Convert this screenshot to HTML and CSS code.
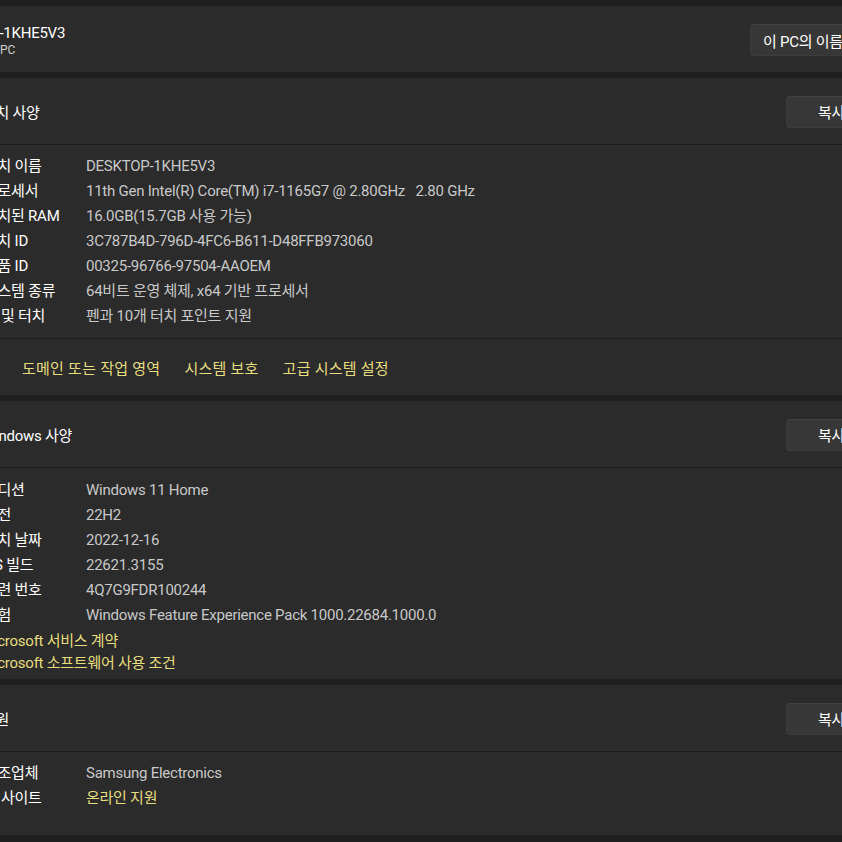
FILE: index.html
```html
<!DOCTYPE html>
<html lang="ko">
<head>
    <meta charset="UTF-8">
    <meta name="viewport" content="width=device-width, initial-scale=1.0">
    <title>정보</title>
    <link rel="stylesheet" href="styles.css">
</head>
<body>
    <div class="page">
        <!-- 상단 PC 이름 -->
        <section class="card top-card">
            <div class="pc-name">
                <div class="pc-title">DESKTOP-1KHE5V3</div>
                <div class="pc-sub">PC</div>
            </div>
            <button class="btn rename">이 PC의 이름 바꾸기</button>
        </section>

        <!-- 장치 사양 -->
        <section class="card">
            <div class="card-head">
                <svg class="head-icon" width="20" height="20" viewBox="0 0 20 20"><circle cx="10" cy="10" r="8" fill="none" stroke="#fff" stroke-width="1.2"/><path d="M10 9v5M10 6.2v.6" stroke="#fff" stroke-width="1.4"/></svg>
                <h2>장치 사양</h2>
                <button class="btn copy">복사</button>
            </div>
            <dl class="specs">
                <div class="row"><dt>장치 이름</dt><dd>DESKTOP-1KHE5V3</dd></div>
                <div class="row"><dt>프로세서</dt><dd>11th Gen Intel(R) Core(TM) i7-1165G7 @ 2.80GHz&nbsp;&nbsp;&nbsp;2.80 GHz</dd></div>
                <div class="row"><dt>설치된 RAM</dt><dd>16.0GB(15.7GB 사용 가능)</dd></div>
                <div class="row"><dt>장치 ID</dt><dd>3C787B4D-796D-4FC6-B611-D48FFB973060</dd></div>
                <div class="row"><dt>제품 ID</dt><dd>00325-96766-97504-AAOEM</dd></div>
                <div class="row"><dt>시스템 종류</dt><dd>64비트 운영 체제, x64 기반 프로세서</dd></div>
                <div class="row"><dt>펜 및 터치</dt><dd>펜과 10개 터치 포인트 지원</dd></div>
            </dl>
            <div class="links">
                <span class="links-label">관련 링크</span>
                <a href="#">도메인 또는 작업 영역</a>
                <a href="#">시스템 보호</a>
                <a href="#">고급 시스템 설정</a>
            </div>
        </section>

        <!-- Windows 사양 -->
        <section class="card">
            <div class="card-head">
                <svg class="head-icon" width="20" height="20" viewBox="0 0 20 20"><path d="M2 2h7v7H2zM11 2h7v7h-7zM2 11h7v7H2zM11 11h7v7h-7z" fill="none" stroke="#fff" stroke-width="1.2"/></svg>
                <h2>Windows 사양</h2>
                <button class="btn copy">복사</button>
            </div>
            <dl class="specs win">
                <div class="row"><dt>에디션</dt><dd>Windows 11 Home</dd></div>
                <div class="row"><dt>버전</dt><dd>22H2</dd></div>
                <div class="row"><dt>설치 날짜</dt><dd>2022-12-16</dd></div>
                <div class="row"><dt>OS 빌드</dt><dd>22621.3155</dd></div>
                <div class="row"><dt>일련 번호</dt><dd>4Q7G9FDR100244</dd></div>
                <div class="row"><dt>경험</dt><dd>Windows Feature Experience Pack 1000.22684.1000.0</dd></div>
            </dl>
            <div class="legal">
                <a href="#">Microsoft 서비스 계약</a>
                <a href="#">Microsoft 소프트웨어 사용 조건</a>
            </div>
        </section>

        <!-- 지원 -->
        <section class="card">
            <div class="card-head">
                <svg class="head-icon" width="20" height="20" viewBox="0 0 20 20"><circle cx="10" cy="10" r="8" fill="none" stroke="#fff" stroke-width="1.2"/><path d="M8 8a2 2 0 1 1 2 2v2M10 14.5v.6" fill="none" stroke="#fff" stroke-width="1.3"/></svg>
                <h2>지원</h2>
                <button class="btn copy">복사</button>
            </div>
            <dl class="specs support">
                <div class="row"><dt>제조업체</dt><dd>Samsung Electronics</dd></div>
                <div class="row"><dt>웹 사이트</dt><dd><a href="#">온라인 지원</a></dd></div>
            </dl>
        </section>
    </div>
</body>
</html>
```

FILE: styles.css
```css
html, body {
    margin: 0;
    background-color: #1f1f1f;
    overflow: hidden;
}
body {
    font-family: Roboto, "Noto Sans CJK KR", sans-serif;
    font-size: 15px;
    letter-spacing: -0.25px;
    color: #fff;
}
.page {
    width: 965px;
    margin-left: -71px;
    padding-top: 6px;
    display: flex;
    flex-direction: column;
    gap: 6px;
}
.card {
    background-color: #2b2b2b;
    border-radius: 4px;
}
a {
    color: #e6dd7e;
    text-decoration: none;
}

/* 버튼 */
.btn {
    font-family: inherit;
    font-size: 15px;
    letter-spacing: inherit;
    color: #fff;
    background-color: #373737;
    border: 1px solid #3c3c3c;
    border-top-color: #424242;
    border-radius: 4px;
    height: 32px;
    padding: 0 12px;
    white-space: nowrap;
}
.copy {width: 92px; text-align: left; padding-left: 31px;}

/* 상단 */
.top-card {
    height: 66px;
    display: flex;
    align-items: center;
    padding: 0 16px 0 7px;
    margin-right: -22px;
}
.pc-name {flex: 1; padding-top: 3px;}
.pc-title {line-height: 18px;}
.pc-sub {
    font-size: 12px;
    line-height: 16px;
    letter-spacing: 0;
    color: #cfcfcf;
    padding-left: 64px;
}
.rename {
    width: 150px;
    text-align: left;
    padding-left: 12px;
    margin-top: 2px;
}

/* 사양 카드 */
.card-head {
    height: 66px;
    display: flex;
    align-items: center;
    padding: 0 16px;
    border-bottom: 1px solid #1c1c1c;
}
.head-icon {margin-right: 17px;}
.card-head h2 {
    flex: 1;
    margin: 0;
    font-size: 15px;
    font-weight: normal;
}
.card-head .copy {margin-top: 1px;}
.specs {
    margin: 0;
    padding: 9px 16px 9px 55px;
}
.row {
    display: flex;
    line-height: 25px;
}
.row dt {width: 102px;}
.row dd {margin: 0; color: #c8c8c8;}
.win {padding-top: 10px; padding-bottom: 10px;}
.support {padding-bottom: 24px;}

.links {
    height: 56px;
    display: flex;
    align-items: center;
    padding: 0 16px 0 8px;
    border-top: 1px solid #1c1c1c;
}
.links-label {width: 85px;}
.links a {margin-right: 24px; letter-spacing: 0.25px;}

.legal {
    display: flex;
    flex-direction: column;
    padding: 0 16px 5px 52px;
    margin-top: -8px;
    line-height: 22px;
}
```
